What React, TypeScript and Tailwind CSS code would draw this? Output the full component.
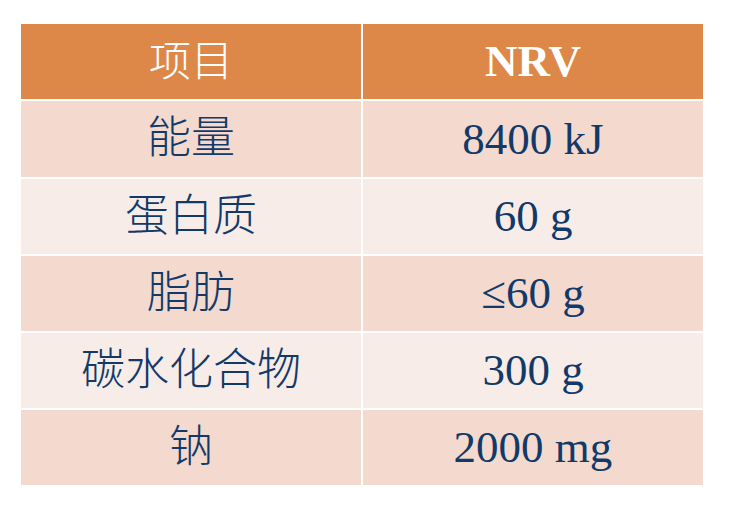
import React from "react";

const rows: { name: string; value: string; h: string; bg: string }[] = [
  { name: "能量", value: "8400 kJ", h: "h-[76px]", bg: "bg-[#f3d9ce]" },
  { name: "蛋白质", value: "60 g", h: "h-[75px]", bg: "bg-[#f8ece8]" },
  { name: "脂肪", value: "≤60 g", h: "h-[75px]", bg: "bg-[#f3d9ce]" },
  { name: "碳水化合物", value: "300 g", h: "h-[75px]", bg: "bg-[#f8ece8]" },
  { name: "钠", value: "2000 mg", h: "h-[75px]", bg: "bg-[#f3d9ce]" },
];

export default function App() {
  return (
    <div
      className="w-[730px] h-[506px] bg-white pl-[21px] pt-[24px]"
      style={{ fontFamily: '"Liberation Serif", "Noto Sans CJK SC", serif' }}
    >
      <div className="w-[682px] flex flex-col gap-[2px] bg-white">
        <div className="flex gap-[2px] h-[75px]">
          <div className="w-[340px] bg-[#dd8849] flex items-center justify-center text-white text-[42px] font-light leading-none">
            项目
          </div>
          <div className="w-[340px] bg-[#dd8849] flex items-center justify-center text-white text-[45px] font-bold leading-none">
            NRV
          </div>
        </div>
        {rows.map((r) => (
          <div key={r.name} className={`flex gap-[2px] ${r.h}`}>
            <div
              className={`w-[340px] ${r.bg} flex items-center justify-center text-[#113a69] text-[44px] font-light leading-none`}
            >
              {r.name}
            </div>
            <div
              className={`w-[340px] ${r.bg} flex items-center justify-center text-[#113a69] text-[45px] leading-none`}
            >
              {r.value}
            </div>
          </div>
        ))}
      </div>
    </div>
  );
}
